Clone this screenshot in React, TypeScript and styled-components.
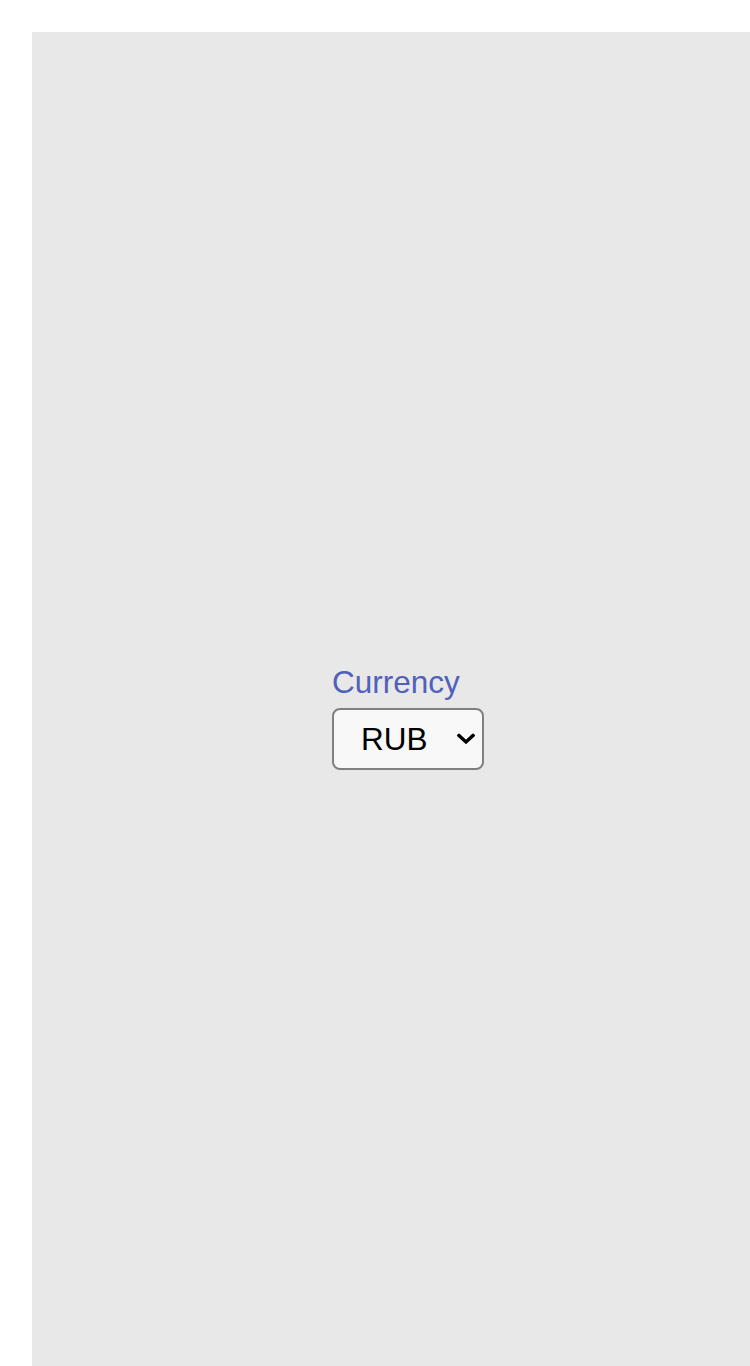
import React from "react";
import styled, { createGlobalStyle } from "styled-components";

const Global = createGlobalStyle`
  html, body {
    margin: 0;
    padding: 0;
    background: #ffffff;
    overflow: hidden;
  }
  body {
    padding: 32px 0 0 32px;
    font-family: "Liberation Sans", Arial, sans-serif;
  }
`;

const Panel = styled.div`
  box-sizing: border-box;
  width: 752px;
  height: 1366px;
  padding-top: 5px;
  background: #e8e8e8;
  display: flex;
  align-items: center;
  justify-content: center;
`;

const Field = styled.div`
  display: flex;
  flex-direction: column;
  align-items: flex-start;
  gap: 9px;
`;

const Label = styled.label`
  font-family: "Liberation Sans", Arial, sans-serif;
  font-size: 31.5px;
  color: #5060bb;
  line-height: 34px;
`;

const SelectWrap = styled.div`
  position: relative;
  width: 152px;
  height: 62px;
`;

const Select = styled.select`
  appearance: none;
  -webkit-appearance: none;
  box-sizing: border-box;
  font-family: "Liberation Sans", Arial, sans-serif;
  font-size: 31.5px;
  color: #000;
  width: 152px;
  height: 62px;
  padding: 0 30px 0 27px;
  background: #f8f8f8;
  border: 2px solid #808080;
  border-radius: 8px;
  outline: none;
`;

const Chevron = styled.svg`
  position: absolute;
  right: 9px;
  top: 50%;
  transform: translateY(-50%);
  width: 18px;
  height: 11px;
  pointer-events: none;
`;

export default function App() {
  return (
    <>
      <Global />
      <Panel>
        <Field>
          <Label htmlFor="currency">Currency</Label>
          <SelectWrap>
            <Select id="currency" defaultValue="RUB">
              <option value="RUB">RUB</option>
              <option value="USD">USD</option>
              <option value="EUR">EUR</option>
            </Select>
            <Chevron viewBox="0 0 18 11" aria-hidden="true">
              <path
                d="M2 2 L9 8.5 L16 2"
                fill="none"
                stroke="#000"
                strokeWidth="3.4"
                strokeLinecap="square"
                strokeLinejoin="miter"
              />
            </Chevron>
          </SelectWrap>
        </Field>
      </Panel>
    </>
  );
}
